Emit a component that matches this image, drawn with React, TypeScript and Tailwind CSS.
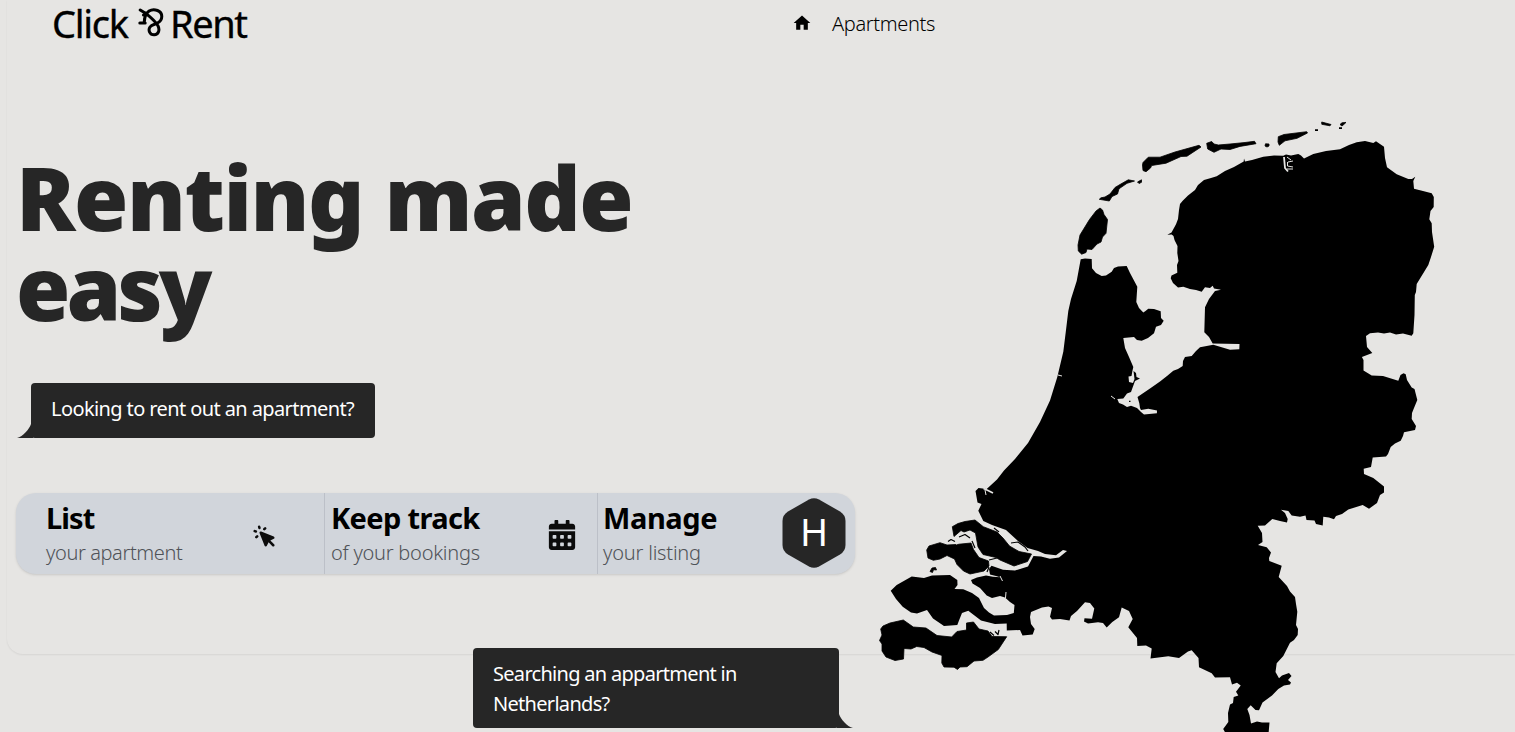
import React from "react";
import { FaCalendarAlt } from "react-icons/fa";
import { HiCursorClick } from "react-icons/hi";
import { MdHome } from "react-icons/md";

function LogoMark() {
  return (
    <svg viewBox="0 0 27 30" className="-mt-[3px] ml-[2px] h-[30px] w-[27px] shrink-0" fill="none" stroke="black" strokeWidth="3" strokeLinecap="round" strokeLinejoin="round">
      <path d="M3.2 3 L8.5 6.2 C12 9 18 14 20.8 18.5 C23.3 23 21.3 28 17 27.8 C12.7 27.6 10.9 23.2 13 20 C14.8 17.4 18 17.5 20.5 16 C26.3 12.8 26.1 5.7 20.5 3.5 C15 1.2 8 3.7 7.3 14.6 M6.5 8 L8.5 6.2" />
      <path d="M2.8 16 L8.2 16" />
    </svg>
  );
}

function NetherlandsMap() {
  return (
    <svg viewBox="870 110 580 622" className="mt-[61px] h-[622px] w-[580px] shrink-0" fill="black" strokeLinejoin="round" aria-hidden="true">
      <path d="M1080.7 259.3 L1085 258.5 L1091.7 259 L1092 268.3 L1096 273 L1101.7 276 L1106 275.5 L1111.7 271.7 L1114 268 L1118 266.5 L1126.7 266 L1130 273 L1137.3 286.7 L1136.3 302 L1139 308 L1143.3 312.6 L1145.5 311 L1148.3 308.7 L1154 309 L1160.7 311.3 L1161 318 L1163.7 320.7 L1161 325 L1156 326.7 L1154 333.3 L1148 338 L1141.7 340.7 L1137 340 L1134 337 L1123.3 338 L1125 348 L1129 357 L1133.3 367 L1132.3 371.5 L1131.5 376 L1128.5 376.5 L1129 382 L1133 383 L1134.5 379 L1133.5 371 L1136 373 L1136.5 377 L1140 378.5 L1135 381 L1131 392 L1127 393.5 L1123.3 398.5 L1117.3 399 L1119 403 L1123 404.5 L1127 407 L1131 405.7 L1137 408 L1141 412 L1144 414.6 L1156.9 413.3 L1157 410.5 L1148.3 408.7 L1141 410 L1140 408 L1139.3 403.3 L1137.5 397 L1150 388.5 L1160 381.5 L1167 376 L1173.3 370.7 L1178 369 L1182.7 366 L1183 361 L1185 357 L1191.7 356 L1196 351 L1200 347.3 L1213.3 344.7 L1230 349.7 L1239.3 349.3 L1239.5 344 L1212.7 343.4 L1209 337 L1204.3 332.3 L1205 307.3 L1209 299 L1215 290.9 L1221 289.7 L1214 288.6 L1212.7 285.7 L1210 288 L1205 287.3 L1201.7 291.7 L1196 290 L1190 289 L1183.3 286.7 L1178 287.5 L1173 283 L1170.7 278.3 L1171.5 275.5 L1177.3 272.7 L1177 265 L1178.5 261 L1177.3 253 L1177.5 246 L1174.5 240 L1173.5 236 L1171.7 234.5 L1167.3 234.7 L1171.5 232.5 L1176 224.3 L1178 219 L1179 210 L1180 204 L1182.7 200.7 L1188 195.5 L1195 190 L1198 185 L1204 180 L1211 178 L1216.7 176.3 L1225 171 L1234 167 L1243.7 161.4 L1244 158.5 L1245 161.6 L1252 160 L1263.3 156.7 L1274 155.6 L1283.3 155.8 L1286 154.4 L1291 155.6 L1298.3 154 L1301 155.5 L1304 158.6 L1313.3 154 L1326 151 L1340 149.3 L1349 145 L1356.7 142.3 L1365 141 L1373.3 143 L1376 141.2 L1384 146.7 L1385 158 L1387 167.3 L1396.7 174.3 L1408.3 179.1 L1412 179 L1415.3 176.8 L1413.3 181 L1414 188.7 L1423 191 L1431.7 193.3 L1433.8 197 L1433.7 206.9 L1430.5 211 L1429.3 219.3 L1431.7 223.3 L1432 232 L1434.2 246.7 L1431 257 L1428.3 265 L1416.7 284 L1416 292 L1414.8 295 L1414.5 315 L1413.3 333.3 L1411.7 335.7 L1403 333.5 L1396 334.5 L1390 332.5 L1384 333.5 L1378 332.5 L1370 333.3 L1366 336 L1367 347 L1372.3 353 L1361.9 356.9 L1363.5 360 L1363.5 370.5 L1371.7 375.5 L1383 376 L1398.3 380.7 L1400.5 375 L1403.5 373.2 L1405.7 374.3 L1407 380 L1411.7 387.5 L1414.5 389 L1417.3 400 L1414 408 L1412 413 L1411.7 419 L1416 426 L1415 430 L1404 432.3 L1403 436 L1400.7 440.7 L1395 443.5 L1390.7 447 L1388 454 L1386 456.4 L1372.7 457.5 L1371 467 L1363.7 468.8 L1364 474 L1373.3 478 L1384 486.5 L1384 492.5 L1380 495 L1377 503 L1369 508.8 L1362.7 505 L1348.3 509.5 L1342 514 L1336 516 L1334 519.3 L1329 517.5 L1323.3 516.7 L1322.7 525.5 L1316 524 L1314.5 520.5 L1306.5 520 L1305.5 515.5 L1300 516.7 L1291.7 515.5 L1288.3 511 L1281 509.7 L1285 513 L1287.7 519 L1287 522.5 L1280 521 L1272.3 519 L1265 525.5 L1257.7 525.7 L1262 533 L1262.5 542 L1258 545 L1266.7 547.3 L1271 552.5 L1269 558 L1269.3 561 L1281.7 565.7 L1278.7 577 L1287 586 L1290 591.5 L1295 597 L1296 604 L1297.3 611.7 L1296 625 L1298 629 L1297.7 635 L1294 640 L1290 642.7 L1283.3 656 L1276.7 663.3 L1275.5 672 L1279 678.2 L1282 675.5 L1289 673 L1291.5 676 L1288 680 L1291 682.5 L1290 684.5 L1284 685.5 L1278.3 689 L1272 695.5 L1262.5 702.5 L1259 710.2 L1255.5 710 L1250.7 705.3 L1247.3 709 L1249.5 715 L1251 723.6 L1257 721.5 L1262 722.5 L1269.5 722.5 L1268.5 734 L1226 734 L1223.2 729 L1228.3 722 L1228 713 L1230 704.5 L1233 703 L1233.7 696.9 L1238.3 695.5 L1236 691.7 L1240.7 685.5 L1237 682.8 L1232 684.5 L1230 677.3 L1215 677.5 L1211.7 673.3 L1199 667.3 L1198.5 658 L1191.7 650.2 L1188 651.5 L1179 658 L1168.3 656.3 L1150.5 658.5 L1151.7 648.5 L1146 645.5 L1137.3 646 L1137 638 L1128.3 627.3 L1132.7 619 L1129 611 L1121.7 607.5 L1119 617.3 L1112.3 622 L1106.7 627.5 L1103 623 L1098 622.3 L1088 623.4 L1084 621.5 L1084.5 618.3 L1092 618.7 L1094.3 608.5 L1090 603 L1085 602.3 L1077 611 L1071 616 L1069.5 620.5 L1060 619 L1052 619.5 L1050 616.7 L1052 608 L1048.5 606.4 L1042 607.5 L1031 612 L1030 617 L1031 624 L1034.7 629 L1032.7 634.5 L1022.5 635.5 L1020 630 L1006.8 630.5 L1006.7 623.5 L995 624 L981 620.5 L968.3 610.8 L962 613 L959 620.5 L957.3 625 L944 626 L933 618.5 L927 610 L917 613.5 L911 612.5 L902.7 606.7 L896 599 L890.7 590.7 L896.7 585 L911.7 576.5 L924 578 L932 575.5 L950 575 L957.3 580 L957.5 585 L954.5 589 L963.3 589.3 L972 593 L979 598 L984 608 L989 612.5 L994 615.5 L1007 615 L1013.8 613 L1014.5 605 L1010 602 L1005 597.5 L1000 596 L992 598 L986.7 595.5 L980 588 L972.5 583.5 L971 580 L977 577.5 L986 575.5 L993 576.8 L1000 577.3 L996 576 L990 574.5 L989 569 L991.5 565.7 L1003 569.8 L1015 570.5 L1028 566.5 L1033.5 556 L1041 556.5 L1050 558.8 L1059 557.5 L1067 551 L1063 550 L1056 555.3 L1045 554 L1038 551 L1027.5 548 L1018 541 L1006 530 L992 525 L983.3 521 L978.3 510.7 L981.5 504 L977.5 502.5 L975.5 491 L978.5 488 L986.7 489 L997 479.5 L1004 470.5 L1015 459 L1028 443 L1040 422 L1050 400.5 L1057.3 377 L1063.3 351.7 L1066 330 L1068.3 311 L1071 299 L1076.7 281 Z" />
      <g stroke="black" strokeWidth="0.8">
        <path d="M952.3 526.7 L958 523.5 L965 521.5 L975 520 L983.3 526.7 L997 532 L1003 538 L1009.5 546 L1019 551.5 L1031.5 554 L1027.5 561.5 L1014 566 L1000 560 L996 557.5 L983 554.5 L978 547 L975.5 533 L970 530 L964 532 L961 530.5 L954 536.5 Z" />
        <path d="M926.7 550 L929 546 L940 542.7 L947 545 L956 544.5 L971 543 L973.5 549.5 L979 557.5 L988.5 561 L989 566 L984 571 L970 574 L963.5 571 L957 564.5 L954.5 559 L947 555.5 L940 559 L933.3 560.3 L928 558 Z" />
        <path d="M880.7 629 L883 626 L890 623 L903.3 620 L913.3 627 L926 628 L937 635.5 L951.7 637 L957 631.5 L966.5 630 L966.5 623 L973.5 622 L979 629 L988 631 L992 636.5 L1006.7 636.7 L998.3 649.5 L988 657 L983 660.3 L974 661 L967 666.7 L960 667 L957.5 669.5 L954 667.2 L944 667 L941.8 663 L942 655.5 L932 652 L924 647.5 L916.7 646.5 L911 649 L904 648.5 L903.5 659 L895 660.5 L886 657 L882 651 L882 644 L879.5 640.5 L882 635 Z" />
        <path d="M1100 208 L1102.5 210 L1104 214.5 L1107.5 219.5 L1106 233.3 L1102.5 237 L1101 242 L1097 244 L1092 249.5 L1087 249 L1086 252.5 L1081.7 254.2 L1078.3 251 L1078 245 L1080 235 L1089.5 219.5 L1096 211 Z" />
        <path d="M1099.3 199.3 L1101 197.8 L1105 197 L1110 194 L1115 187.5 L1120 184.5 L1128.3 179.8 L1134.5 181 L1127 183.3 L1119 188.8 L1117.5 194 L1112 196.5 L1109.3 201 Z" />
        <path d="M1137.5 182 L1141.5 179.8 L1141.5 182.3 L1139 183.5 Z" />
        <path d="M1142.5 165 L1143 162.5 L1148.3 157.2 L1160 157.2 L1175 152 L1199 145.3 L1201 147 L1187 156.2 L1181 156.5 L1166 163.2 L1151.7 165.5 L1150.5 168 L1146 171.7 L1143 170.5 Z" />
        <path d="M1206.7 143.3 L1211.7 141.5 L1214 144 L1218.3 145 L1230 144 L1245 142.5 L1254.5 141.3 L1256 143.7 L1240 146.4 L1230 149.5 L1221 149 L1214 152.3 L1207.7 149 Z" />
        <path d="M1265.5 143.8 L1269 144 L1269 146 L1267 147 L1265 146 Z M1278 142 L1278.3 136.7 L1284 134.5 L1306.7 131.7 L1307.5 133 L1297 138.3 L1285 140.8 L1279.3 145.3 Z M1321.7 122 L1331 124.5 L1330 125.8 L1321.8 124.3 Z M1340 124.5 L1342 122.8 L1346 122.4 L1344 124.3 L1342 126 Z" />
        <path d="M930 571.5 L932 568 L935.5 567.5 L936.5 570 L933.5 569.7 L932.5 572.5 Z" />
      </g>
      <path d="M1315 129.2 h3 v1.7 h-3 Z M1339 127.2 h3 v1.7 h-3 Z" />
      <g fill="none" stroke="#e6e5e3" strokeWidth="1">
        <path d="M1284 157 L1285 168 L1288 171.5" strokeWidth="1.8" />
        <path d="M1287.5 162 L1287.5 166 L1293 167 M1287 157 L1291 160 M1288 162 L1293 161 M1287 169 L1293 169" />
        <path d="M983.5 488.5 L988 490.5 L993 493" strokeWidth="1.8" />
        <path d="M985 490 L986 495 M1058 375 L1062 376 M1111 396 L1115 399 M1000 576 L1002.5 581 M1006 592 L1005.5 598" />
        <path d="M956 544 L961 540.5 L956 538" strokeWidth="1.6" />
        <path d="M977 548 L974 542" strokeWidth="1.6" />
      </g>
      <g fill="none" stroke="black" strokeWidth="1.2">
        <path d="M948 541.5 L951 539.5 L955 541.5 M959 537 L965 534.5 L970 538 M972 541 L975 548 M994 528 L999 532 M1011 543 L1018 542 L1025 547 L1028 551 M989 560 L997 558 M989 567 L987 572 M1129 401.3 h1.5 M990 632 L994 635.5 M995 631.5 L998 634.5 L999 630" />
      </g>
    </svg>
  );
}

function Feature({ title, text, className, children }: { title: React.ReactNode; text: React.ReactNode; className: string; children: React.ReactNode }) {
  return (
    <div className={`flex h-full items-center justify-between ${className}`}>
      <div className="whitespace-nowrap">
        <div className="text-[29px] leading-9 font-bold text-black">{title}</div>
        <div className="mt-[3px] text-[20px] leading-7 font-light text-[#4f5257]">{text}</div>
      </div>
      {children}
    </div>
  );
}

export default function App() {
  return (
    <div className="h-[732px] overflow-hidden bg-[#e6e5e3] font-['Noto_Sans',sans-serif] text-black">
      <div className="ml-[7px] h-[654px] rounded-bl-2xl shadow-[0_1px_2px_rgb(0_0_0/0.07)]">
        <header className="flex h-[49px] items-center pl-[45px]">
          <div className="flex h-[49px] w-[740px] items-center pb-[2px] text-[38px] leading-[47px]">
            <span className="w-[83px] tracking-[-1.3px] [-webkit-text-stroke:0.35px_black]">Click</span>
            <LogoMark />
            <span className="ml-[6px] tracking-[-1.4px] [-webkit-text-stroke:0.35px_black]">Rent</span>
          </div>
          <MdHome size={20} className="-mt-[3px] shrink-0" />
          <span className="-mt-px ml-[20px] text-[20px] font-light tracking-[-0.35px]">Apartments</span>
        </header>

        <div className="flex h-[605px] items-start">
          <main className="flex w-[863px] shrink-0 flex-col pl-[9px]">
            <h1 className="mt-[103px] w-[660px] text-[88px] leading-[90px] font-black tracking-[-1.5px] text-[#262626]">
              Renting made<br />
              <span className="tracking-[-4px]">easy</span>
            </h1>

            <div className="relative mt-[51px] ml-[15px] flex h-[55px] w-[344px] items-center rounded bg-[#262626] pb-[3px] pl-5 text-[20px] tracking-[-0.6px] whitespace-nowrap text-white">
              Looking to rent out an apartment?
              <svg viewBox="0 0 16 14" className="absolute bottom-0 -left-[14px] h-[14px] w-[16px]" fill="#262626">
                <path d="M14 0 C12.5 5 6 12.5 0 14 H16 V0 Z" />
              </svg>
            </div>

            <section className="mt-[55px] flex h-[81px] w-[839px] rounded-[20px] bg-[#d1d5db] shadow">
              <Feature
                title={<span className="tracking-[-0.9px]">List</span>}
                text={<span className="tracking-[-0.4px]">your apartment</span>}
                className="w-[309px] border-r border-[#bcc0c8] pr-[47px] pl-[30px]"
              >
                <HiCursorClick size={25} className="mt-[6px] text-[#0c0c0c]" />
              </Feature>
              <Feature
                title={<span className="tracking-[-0.65px]">Keep track</span>}
                text={<span className="tracking-[-0.25px]">of your bookings</span>}
                className="w-[273px] border-r border-[#bcc0c8] pr-[20px] pl-[6px]"
              >
                <FaCalendarAlt size={30} className="mt-[2px] text-[#0c0c0c]" />
              </Feature>
              <Feature
                title={<span className="tracking-[-0.4px]">Manage</span>}
                text={<span className="tracking-[-0.2px]">your listing</span>}
                className="w-[257px] pr-[9px] pl-[5px]"
              >
                <div className="-mt-[2px] grid h-[70px] w-[64px] place-items-center">
                  <svg viewBox="0 0 64 70" className="col-start-1 row-start-1 h-[70px] w-[64px]" fill="#262626">
                    <path d="M27 1.5 Q32 -1 37 1.5 L58 13.5 Q63.5 17 63.5 23 V47 Q63.5 53 58 56.5 L37 68.5 Q32 71 27 68.5 L6 56.5 Q.5 53 .5 47 V23 Q.5 17 6 13.5 Z" />
                  </svg>
                  <span className="col-start-1 row-start-1 -mt-[4px] text-[38px] leading-none text-white">H</span>
                </div>
              </Feature>
            </section>

            <div className="relative mt-[74px] ml-[457px] flex h-[80px] w-[366px] shrink-0 items-center rounded bg-[#262626] px-5 pt-[2px] text-[20px] leading-[30px] tracking-[-0.7px] text-white">
              <p className="w-[270px]">Searching an appartment in Netherlands?</p>
              <svg viewBox="0 0 16 14" className="absolute -right-[14px] bottom-0 h-[14px] w-[16px]" fill="#262626">
                <path d="M2 0 C3.5 5 10 12.5 16 14 H0 V0 Z" />
              </svg>
            </div>
          </main>
          <NetherlandsMap />
        </div>
      </div>
    </div>
  );
}
